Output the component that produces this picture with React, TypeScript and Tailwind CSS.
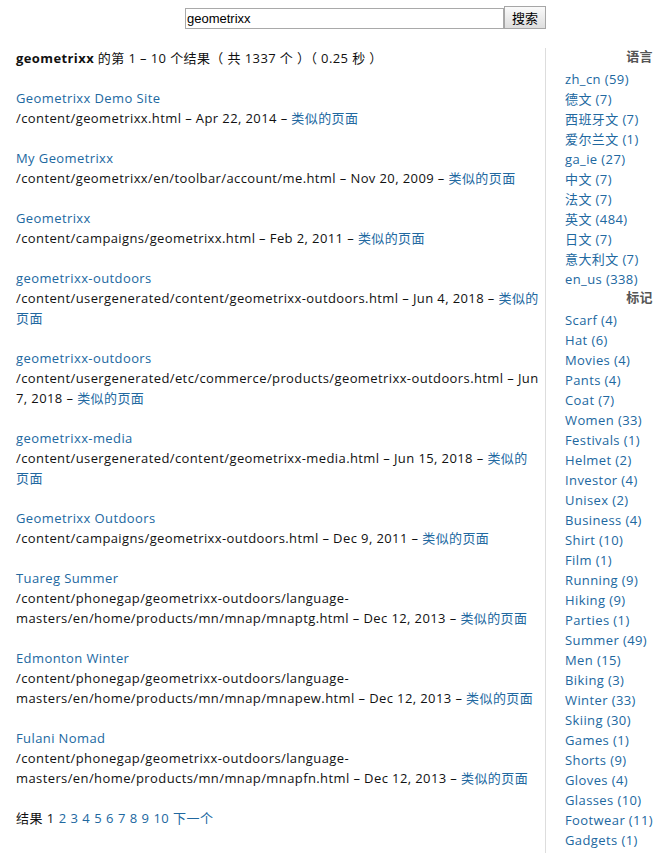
import React from 'react';

const results = [
  { title: 'Geometrixx Demo Site', url: '/content/geometrixx.html', date: 'Apr 22, 2014' },
  { title: 'My Geometrixx', url: '/content/geometrixx/en/toolbar/account/me.html', date: 'Nov 20, 2009' },
  { title: 'Geometrixx', url: '/content/campaigns/geometrixx.html', date: 'Feb 2, 2011' },
  { title: 'geometrixx-outdoors', url: '/content/usergenerated/content/geometrixx-outdoors.html', date: 'Jun 4, 2018' },
  { title: 'geometrixx-outdoors', url: '/content/usergenerated/etc/commerce/products/geometrixx-outdoors.html', date: 'Jun 7, 2018' },
  { title: 'geometrixx-media', url: '/content/usergenerated/content/geometrixx-media.html', date: 'Jun 15, 2018' },
  { title: 'Geometrixx Outdoors', url: '/content/campaigns/geometrixx-outdoors.html', date: 'Dec 9, 2011' },
  { title: 'Tuareg Summer', url: '/content/phonegap/geometrixx-outdoors/language-masters/en/home/products/mn/mnap/mnaptg.html', date: 'Dec 12, 2013' },
  { title: 'Edmonton Winter', url: '/content/phonegap/geometrixx-outdoors/language-masters/en/home/products/mn/mnap/mnapew.html', date: 'Dec 12, 2013' },
  { title: 'Fulani Nomad', url: '/content/phonegap/geometrixx-outdoors/language-masters/en/home/products/mn/mnap/mnapfn.html', date: 'Dec 12, 2013' },
];

const languages = [
  'zh_cn (59)', '德文 (7)', '西班牙文 (7)', '爱尔兰文 (1)', 'ga_ie (27)', '中文 (7)',
  '法文 (7)', '英文 (484)', '日文 (7)', '意大利文 (7)', 'en_us (338)',
];

const tags = [
  'Scarf (4)', 'Hat (6)', 'Movies (4)', 'Pants (4)', 'Coat (7)', 'Women (33)', 'Festivals (1)',
  'Helmet (2)', 'Investor (4)', 'Unisex (2)', 'Business (4)', 'Shirt (10)', 'Film (1)',
  'Running (9)', 'Hiking (9)', 'Parties (1)', 'Summer (49)', 'Men (15)', 'Biking (3)',
  'Winter (33)', 'Skiing (30)', 'Games (1)', 'Shorts (9)', 'Gloves (4)', 'Glasses (10)',
  'Footwear (11)', 'Gadgets (1)',
];

const link = 'text-[#21689f]';

export default function App() {
  return (
    <div className="font-['Open_Sans','Noto_Sans_CJK_SC',sans-serif] text-[13px] leading-5 tracking-[0.4px] text-[#111] bg-white min-h-[853px]">
      {/* search bar */}
      <form className="flex justify-center pt-[6px] pl-[62px]" onSubmit={(e) => e.preventDefault()}>
        <input
          defaultValue="geometrixx"
          className="w-[319px] h-[21px] mt-[2px] border border-[#a9a9a9] px-[1px] font-['Liberation_Sans','Noto_Sans_CJK_SC',sans-serif] tracking-normal text-[13px] text-black outline-none"
        />
        <button className="h-[23px] w-[42px] border border-[#a6a6a6] bg-gradient-to-b from-[#fafafa] to-[#dedede] font-['Noto_Sans_CJK_SC',sans-serif] tracking-normal text-[13px] text-black leading-none">
          搜索
        </button>
      </form>

      <div className="flex mt-[19px]">
        {/* results */}
        <div className="w-[545px] shrink-0 pl-4 pr-[5px]">
          <p className="mb-5">
            <b>geometrixx</b> 的第 1 – 10 个结果（ 共 1337 个 ）（ 0.25 秒 ）
          </p>
          {results.map((r, i) => (
            <div key={i} className="mb-5">
              <a className={`block ${link}`}>{r.title}</a>
              <div>
                {r.url} – {r.date} – <a className={link}>类似的页面</a>
              </div>
            </div>
          ))}
          <div className="flex gap-[4px]">
            <span>结果</span>
            <span>1</span>
            {[2, 3, 4, 5, 6, 7, 8, 9, 10].map((n) => (
              <a key={n} className={link}>{n}</a>
            ))}
            <a className={link}>下一个</a>
          </div>
        </div>

        {/* sidebar */}
        <div className="flex-1 border-l border-[#dddddd] pl-[19px] pr-[17px] pb-4">
          <div className="text-right font-bold text-[#555] leading-4 mb-[5px]">语言</div>
          {languages.map((l) => (
            <a key={l} className={`block whitespace-nowrap ${link}`}>{l}</a>
          ))}
          <div className="text-right font-bold text-[#555] leading-4 mb-[5px]">标记</div>
          {tags.map((t) => (
            <a key={t} className={`block whitespace-nowrap ${link}`}>{t}</a>
          ))}
        </div>
      </div>
    </div>
  );
}
